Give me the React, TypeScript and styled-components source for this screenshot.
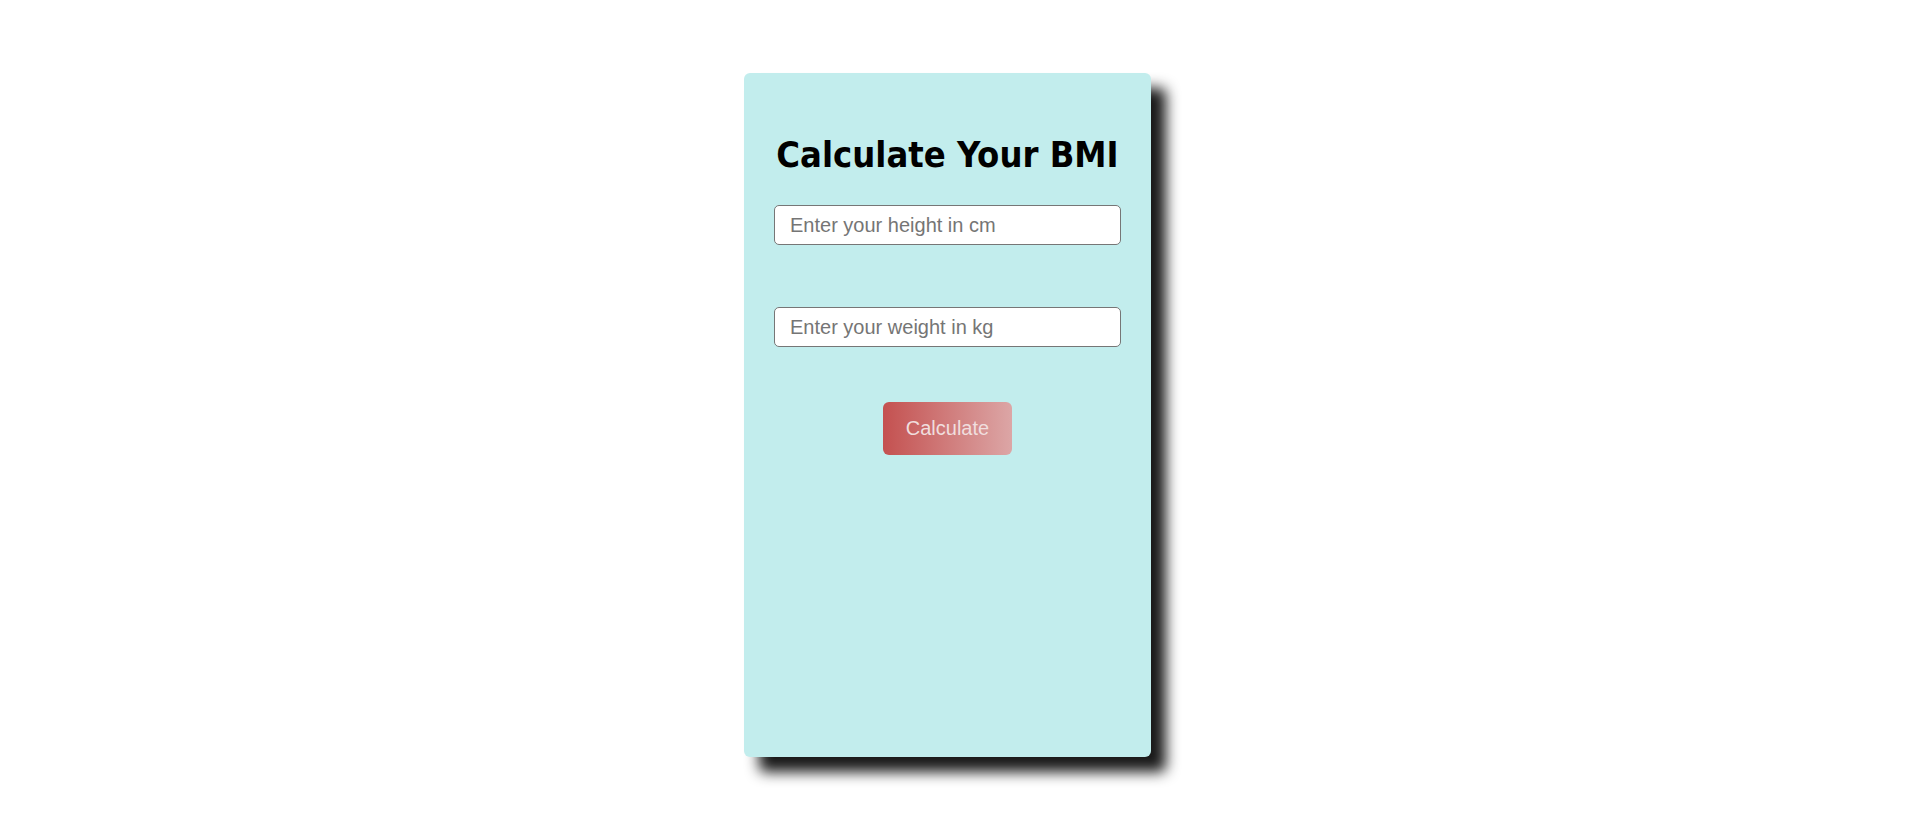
import React from 'react'
import styled, { createGlobalStyle } from 'styled-components'

const GlobalStyle = createGlobalStyle`
html, body {
  margin: 0;
  padding: 0;
  background: #ffffff;
}
`

export const Page = styled.div`
display: flex;
justify-content: center;
min-height: 822px;
padding: 73px 25px 0 0;
box-sizing: border-box;
`

export const Card = styled.div`
width: 407px;
height: 684px;
box-sizing: border-box;
padding: 0 30px;
background: #c2eded;
border-radius: 6px;
box-shadow: 15px 15px 14px #1a1a1a;
display: flex;
flex-direction: column;
align-items: center;
`

export const Title = styled.h1`
margin: 61px 0 30px;
font-family: 'DejaVu Sans Condensed', 'DejaVu Sans', sans-serif;
font-stretch: condensed;
font-weight: 700;
font-size: 36px;
line-height: normal;
color: #000;
white-space: nowrap;
`

export const Field = styled.input<{ $gap: number }>`
width: 100%;
height: 40px;
box-sizing: border-box;
padding: 0 15px;
border: 1px solid #767676;
border-radius: 5px;
background: #fff;
font-family: 'Liberation Sans', Arial, sans-serif;
font-size: 20px;
color: #333;
margin-bottom: ${(p) => p.$gap}px;
&::placeholder {
  color: #757575;
}
`

export const Button = styled.button`
width: 129px;
height: 53px;
border: none;
border-radius: 6px;
background: linear-gradient(to right, #c45150, #dca6a6);
color: #f0dede;
font-family: 'Liberation Sans', Arial, sans-serif;
font-size: 20px;
cursor: pointer;
`

export default function App() {
  return (
    <>
      <GlobalStyle />
      <Page>
        <Card>
          <Title>Calculate Your BMI</Title>
          <Field type="text" placeholder="Enter your height in cm" $gap={62} />
          <Field type="text" placeholder="Enter your weight in kg" $gap={55} />
          <Button>Calculate</Button>
        </Card>
      </Page>
    </>
  )
}
